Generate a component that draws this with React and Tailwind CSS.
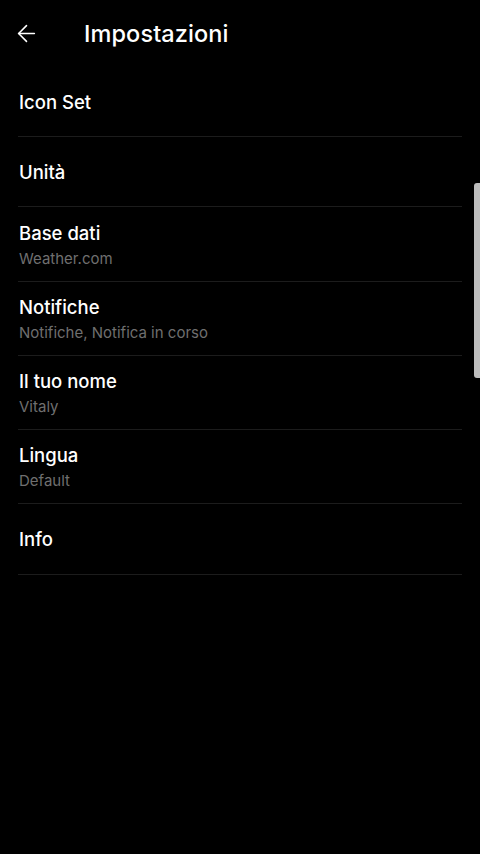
import { ArrowLeft } from 'lucide-react'

const items = [
  { title: 'Icon Set', h: 'h-[70px]' },
  { title: 'Unità', h: 'h-[70px]' },
  { title: 'Base dati', subtitle: 'Weather.com', h: 'h-[75px]' },
  { title: 'Notifiche', subtitle: 'Notifiche, Notifica in corso', h: 'h-[74px]' },
  { title: 'Il tuo nome', subtitle: 'Vitaly', h: 'h-[74px]' },
  { title: 'Lingua', subtitle: 'Default', h: 'h-[74px]' },
  { title: 'Info', h: 'h-[71px]' },
]

export default function App() {
  return (
    <div className="relative min-h-[854px] w-[480px] bg-black font-['Inter','Roboto',sans-serif] text-white overflow-hidden">
      {/* Header */}
      <div className="flex h-[67px] items-center">
        <div className="flex w-[84px] pl-[13px]">
          <ArrowLeft className="h-[27px] w-[27px]" strokeWidth={1.4} />
        </div>
        <h1 className="text-[23.5px] font-medium tracking-[0.1px]">Impostazioni</h1>
      </div>

      {/* Settings list */}
      <div className="mx-[18px]">
        {items.map((item, index) => (
          <div
            key={index}
            className={`flex flex-col justify-center border-b border-[#1c1c1c] pl-px ${item.h} ${item.subtitle ? 'gap-[4px] pt-[1px]' : ''}`}
          >
            <span className="text-[18.5px] font-medium leading-[24px]">{item.title}</span>
            {item.subtitle && (
              <span className="text-[15px] leading-[20px] text-[#6f6f6f]">{item.subtitle}</span>
            )}
          </div>
        ))}
      </div>

      {/* Scroll indicator */}
      <div className="absolute right-0 top-[183px] h-[195px] w-[6px] rounded-l-[3px] bg-[#bdbdbd]" />
    </div>
  )
}
